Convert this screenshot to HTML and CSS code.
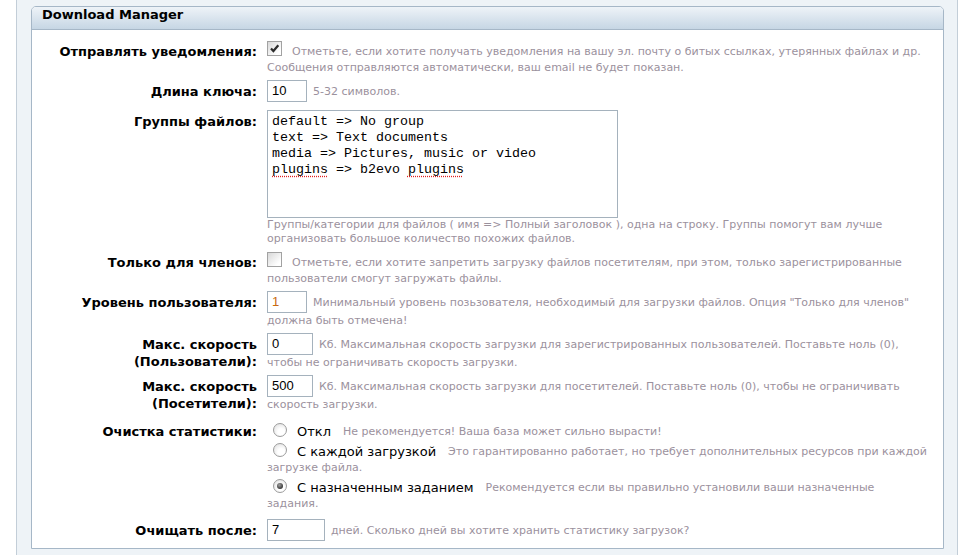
FILE: index.html
```html
<!DOCTYPE html>
<html lang="ru">
<head>
<meta charset="utf-8">
<title>Download Manager</title>
<link rel="stylesheet" href="styles.css">
</head>
<body>
<div class="wrap">
  <div class="panel">
    <div class="panel-head">Download Manager</div>
    <div class="panel-body">
      <div class="row">
        <div class="lbl">Отправлять уведомления:</div>
        <div class="ctl">
          <div class="l1"><span class="cb"><svg viewBox="0 0 13 13" width="13" height="13"><path d="M3 6.4 L5.4 9 L10.3 3.2" fill="none" stroke="#2b2b2b" stroke-width="2.2"/></svg></span><span class="note">Отметьте, если хотите получать уведомления на вашу эл. почту о битых ссылках, утерянных файлах и др.</span></div>
          <div class="l2 note">Сообщения отправляются автоматически, ваш email не будет показан.</div>
        </div>
      </div>
      <div class="row in-row gap8">
        <div class="lbl">Длина ключа:</div>
        <div class="ctl">
          <div class="l1i"><span class="inp w40">10</span><span class="note">5-32 символов.</span></div>
        </div>
      </div>
      <div class="row in-row gap8">
        <div class="lbl">Группы файлов:</div>
        <div class="ctl">
          <div class="ta">default =&gt; No group<br>text =&gt; Text documents<br>media =&gt; Pictures, music or video<br><span class="sp">plugins</span> =&gt; b2evo <span class="sp">plugins</span></div>
          <div class="tnote note">Группы/категории для файлов ( имя =&gt; Полный заголовок ), одна на строку. Группы помогут вам лучше</div>
          <div class="tnote note">организовать большое количество похожих файлов.</div>
        </div>
      </div>
      <div class="row">
        <div class="lbl">Только для членов:</div>
        <div class="ctl">
          <div class="l1"><span class="cb"></span><span class="note">Отметьте, если хотите запретить загрузку файлов посетителям, при этом, только зарегистрированные</span></div>
          <div class="l2 note">пользователи смогут загружать файлы.</div>
        </div>
      </div>
      <div class="row in-row">
        <div class="lbl">Уровень пользователя:</div>
        <div class="ctl">
          <div class="l1i"><span class="inp w40 orange">1</span><span class="note">Минимальный уровень позьзователя, необходимый для загрузки файлов. Опция "Только для членов"</span></div>
          <div class="l2 note">должна быть отмечена!</div>
        </div>
      </div>
      <div class="row in-row">
        <div class="lbl">Макс. скорость<br>(Пользователи):</div>
        <div class="ctl">
          <div class="l1i"><span class="inp w46">0</span><span class="note">Кб. Максимальная скорость загрузки для зарегистрированных пользователей. Поставьте ноль (0),</span></div>
          <div class="l2 note">чтобы не ограничивать скорость загрузки.</div>
        </div>
      </div>
      <div class="row in-row gap10">
        <div class="lbl">Макс. скорость<br>(Посетители):</div>
        <div class="ctl">
          <div class="l1i"><span class="inp w46">500</span><span class="note">Кб. Максимальная скорость загрузки для посетителей. Поставьте ноль (0), чтобы не ограничивать</span></div>
          <div class="l2 note">скорость загрузки.</div>
        </div>
      </div>
      <div class="row">
        <div class="lbl lbl-opt">Очистка статистики:</div>
        <div class="ctl">
          <div class="opt">
            <div class="ol1"><span class="rd"></span><span class="optlbl">Откл</span><span class="note">Не рекомендуется! Ваша база может сильно вырасти!</span></div>
          </div>
          <div class="opt">
            <div class="ol1"><span class="rd"></span><span class="optlbl">С каждой загрузкой</span><span class="note">Это гарантированно работает, но требует дополнительных ресурсов при каждой</span></div>
            <div class="ol2 note">загрузке файла.</div>
          </div>
          <div class="opt">
            <div class="ol1"><span class="rd on"></span><span class="optlbl">С назначенным заданием</span><span class="note">Рекомендуется если вы правильно установили ваши назначенные</span></div>
            <div class="ol2 note">задания.</div>
          </div>
        </div>
      </div>
      <div class="row in-row">
        <div class="lbl">Очищать после:</div>
        <div class="ctl">
          <div class="l1i"><span class="inp w58">7</span><span class="note">дней. Сколько дней вы хотите хранить статистику загрузок?</span></div>
        </div>
      </div>
    </div>
  </div>
</div>
</body>
</html>
```
FILE: styles.css
```css
html, body {
  margin: 0;
  padding: 0;
  background: #ffffff;
  height: 555px;
  overflow: hidden;
}
.wrap {
  margin-left: 16px;
  width: 942px;
  height: 555px;
  box-sizing: border-box;
  padding: 6px 13px 0 14px;
  border-left: 1px solid #c3ced8;
  border-right: 1px solid #c3ced8;
  background: #eef3f7;
}
.panel {
  border: 1px solid #a6b7c7;
  border-radius: 5px 5px 0 0;
  background: #ffffff;
  height: 543px;
  box-sizing: border-box;
}
.panel-head {
  height: 22px;
  line-height: 23px;
  padding-left: 10px;
  border-bottom: 1px solid #a6b7c7;
  border-radius: 4px 4px 0 0;
  background: linear-gradient(#eef3f8, #c6d6e4);
  font: bold 13px "DejaVu Sans", Verdana, sans-serif;
  color: #000;
}
.panel-body {
  padding-top: 13px;
}
.row {
  display: flex;
  align-items: flex-start;
  margin-bottom: 5px;
}
.row.gap8 { margin-bottom: 8px; }
.row.gap10 { margin-bottom: 10px; }
.lbl {
  width: 225px;
  flex: none;
  text-align: right;
  font: bold 13px/17px "DejaVu Sans", Verdana, sans-serif;
  color: #000;
  white-space: nowrap;
}
.in-row .lbl {
  padding-top: 3px;
}
.lbl-opt {
  padding-top: 1px;
}
.ctl {
  margin-left: 10px;
  flex: 1;
  font: 11px/15px "DejaVu Sans", Verdana, sans-serif;
  white-space: nowrap;
}
.note {
  color: #9b919d;
  font-size: 11px;
}
.l1 {
  display: flex;
  align-items: center;
  height: 17px;
}
.l2 {
  line-height: 15px;
}
.l1i {
  display: flex;
  align-items: center;
  height: 22px;
}
.cb {
  flex: none;
  align-self: flex-start;
  width: 13px;
  height: 13px;
  margin: -2px 10px 0 0;
  border: 1px solid #a2a2a2;
  background: linear-gradient(135deg, #d8d8d8, #ffffff 80%);
}
.cb svg {
  display: block;
}
.inp {
  display: block;
  flex: none;
  box-sizing: border-box;
  height: 22px;
  border: 1px solid #a5b2bd;
  padding-left: 4px;
  margin-right: 6px;
  font: 13px/20px "Liberation Sans", Arial, sans-serif;
  color: #000;
  background: #fff;
}
.w40 { width: 40px; }
.w46 { width: 46px; }
.w58 { width: 58px; }
.orange { color: #c86a10; }
.ta {
  box-sizing: border-box;
  width: 351px;
  height: 108px;
  border: 1px solid #a5b2bd;
  padding: 3px 4px;
  font: 13.33px/16px "Liberation Mono", "Courier New", monospace;
  color: #000;
}
.tnote {
  line-height: 14px;
}
.sp {
  text-decoration: underline dotted #e02020;
  text-underline-offset: 3px;
}
.opt {
  margin-bottom: 2px;
}
.ol1 {
  display: flex;
  align-items: center;
  height: 18px;
}
.ol2 {
  line-height: 16px;
}
.rd {
  flex: none;
  align-self: flex-start;
  position: relative;
  box-sizing: border-box;
  width: 14px;
  height: 14px;
  margin: 1px 10px 0 6px;
  border: 1px solid #9c9c9c;
  border-radius: 50%;
  background: radial-gradient(circle at 60% 65%, #ffffff 30%, #e0e0e0 90%);
}
.rd.on::after {
  content: "";
  position: absolute;
  left: 3px;
  top: 3px;
  width: 6px;
  height: 6px;
  border-radius: 50%;
  background: radial-gradient(circle at 40% 35%, #a0a0a0, #333333 75%);
}
.optlbl {
  font-size: 13px;
  color: #000;
  margin-right: 12px;
}
```
